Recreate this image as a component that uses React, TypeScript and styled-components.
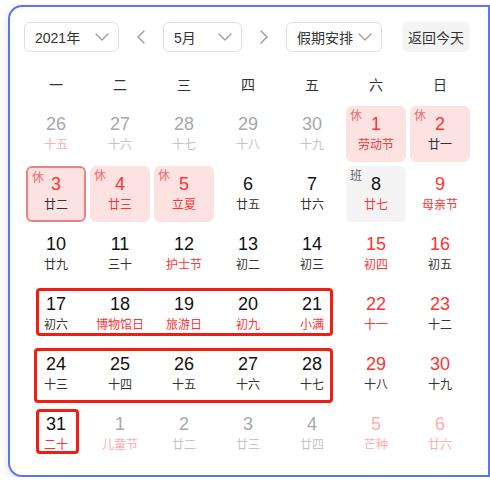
import React from "react";
import styled, { createGlobalStyle } from "styled-components";

const Global = createGlobalStyle`
  html, body { margin: 0; padding: 0; background: #fff; }
  body { font-family: "Liberation Sans", "Noto Sans CJK SC", sans-serif; }
`;

const Page = styled.div`
  padding: 5px 0 0 8px;
`;

const Card = styled.div`
  width: 482px;
  height: 472px;
  box-sizing: border-box;
  border: 2px solid #5b76f0;
  border-radius: 14px 0 0 14px;
  box-shadow: 0 3px 8px rgba(0, 0, 0, 0.12);
  padding: 15px 0 0 14px;
  background: #fff;
`;

const Header = styled.div`
  display: flex;
  align-items: center;
  height: 30px;
`;

const Select = styled.div<{ $w: number }>`
  width: ${(p) => p.$w}px;
  height: 30px;
  box-sizing: border-box;
  border: 1px solid #dcdfe6;
  border-radius: 6px;
  display: flex;
  align-items: center;
  justify-content: space-between;
  padding: 0 9px 0 10px;
  font-size: 14px;
  color: #333;
`;

const ArrowBtn = styled.div`
  width: 44px;
  height: 30px;
  display: flex;
  align-items: center;
  justify-content: center;
`;

const TodayBtn = styled.div`
  margin-left: 20px;
  width: 68px;
  height: 30px;
  border-radius: 6px;
  background: #f4f4f5;
  display: flex;
  align-items: center;
  justify-content: center;
  font-size: 14px;
  color: #333;
`;

const Weekdays = styled.div`
  margin-top: 22px;
  display: grid;
  grid-template-columns: repeat(7, 64px);
  height: 20px;
  align-items: center;
`;

const Weekday = styled.div`
  text-align: center;
  font-size: 14px;
  color: #333;
  font-family: "Noto Sans CJK SC", sans-serif;
`;

const GridWrap = styled.div`
  position: relative;
  margin: 12px 0 0 2px;
`;

const Grid = styled.div`
  display: grid;
  grid-template-columns: repeat(7, 60px);
  grid-auto-rows: 56px;
  column-gap: 4px;
  row-gap: 4px;
`;

const colors: Record<string, string> = {
  k: "#111",
  l: "#333",
  r: "#ff3333",
  g: "#a8a8a8",
  s: "#c4c4c4",
  p: "#ffadad",
};

const Cell = styled.div<{ $variant?: string; $selected?: boolean }>`
  position: relative;
  box-sizing: border-box;
  border-radius: 6px;
  display: flex;
  flex-direction: column;
  align-items: center;
  padding-top: 7px;
  background: ${(p) =>
    p.$variant === "rest" ? "#fde2e2" : p.$variant === "work" ? "#f4f4f5" : "transparent"};
  border: ${(p) => (p.$selected ? "2px solid #f08080" : "none")};
  ${(p) => (p.$selected ? "padding-top: 5px;" : "")}
`;

const Num = styled.div<{ $c: string }>`
  font-family: "Liberation Sans", sans-serif;
  font-size: 18px;
  line-height: 22px;
  color: ${(p) => p.$c};
`;

const Lunar = styled.div<{ $c: string }>`
  margin-top: 1px;
  font-family: "Noto Sans CJK SC", sans-serif;
  font-size: 12px;
  line-height: 16px;
  color: ${(p) => p.$c};
`;

const Tag = styled.span<{ $work?: boolean }>`
  position: absolute;
  left: 4px;
  top: 2px;
  font-family: "Noto Sans CJK SC", sans-serif;
  font-size: 12px;
  line-height: 14px;
  color: ${(p) => (p.$work ? "#666" : "#f56c6c")};
`;

const Mark = styled.div`
  position: absolute;
  box-sizing: border-box;
  border: 3px solid #f21d12;
  border-radius: 4px;
  pointer-events: none;
`;

type Day = {
  d: number;
  l: string;
  n: string;
  lc: string;
  v?: "rest" | "work";
  sel?: boolean;
};

const raw: [number, string, string, string, string?][] = [
  [26, "十五", "g", "p"], [27, "十六", "g", "s"], [28, "十七", "g", "s"], [29, "十八", "g", "s"], [30, "十九", "g", "s"], [1, "劳动节", "r", "r", "rest"], [2, "廿一", "r", "l", "rest"],
  [3, "廿二", "r", "l", "sel"], [4, "廿三", "r", "r", "rest"], [5, "立夏", "r", "r", "rest"], [6, "廿五", "k", "l"], [7, "廿六", "k", "l"], [8, "廿七", "k", "r", "work"], [9, "母亲节", "r", "r"],
  [10, "廿九", "k", "l"], [11, "三十", "k", "l"], [12, "护士节", "k", "r"], [13, "初二", "k", "l"], [14, "初三", "k", "l"], [15, "初四", "r", "r"], [16, "初五", "r", "l"],
  [17, "初六", "k", "l"], [18, "博物馆日", "k", "r"], [19, "旅游日", "k", "r"], [20, "初九", "k", "r"], [21, "小满", "k", "r"], [22, "十一", "r", "r"], [23, "十二", "r", "l"],
  [24, "十三", "k", "l"], [25, "十四", "k", "l"], [26, "十五", "k", "l"], [27, "十六", "k", "l"], [28, "十七", "k", "l"], [29, "十八", "r", "l"], [30, "十九", "r", "l"],
  [31, "二十", "k", "r"], [1, "儿童节", "g", "p"], [2, "廿二", "g", "s"], [3, "廿三", "g", "s"], [4, "廿四", "g", "s"], [5, "芒种", "p", "p"], [6, "廿六", "p", "p"],
];

const days: Day[] = raw.map(([d, l, n, lc, v]) => ({
  d,
  l,
  n: colors[n],
  lc: colors[lc],
  v: v === "sel" ? "rest" : (v as "rest" | "work" | undefined),
  sel: v === "sel",
}));

const Chevron = () => (
  <svg width="14" height="8" viewBox="0 0 14 8" fill="none">
    <polyline points="1,1 7,7 13,1" stroke="#999" strokeWidth="1.3" strokeLinejoin="round" strokeLinecap="round" />
  </svg>
);

const Side = ({ dir }: { dir: "l" | "r" }) => (
  <svg width="8" height="14" viewBox="0 0 8 14" fill="none">
    <polyline
      points={dir === "l" ? "7,1 1,7 7,13" : "1,1 7,7 1,13"}
      stroke="#999"
      strokeWidth="1.4"
      strokeLinejoin="round"
      strokeLinecap="round"
    />
  </svg>
);

export default function App() {
  return (
    <Page>
      <Global />
      <Card>
        <Header>
          <Select $w={95}>
            <span>2021年</span>
            <Chevron />
          </Select>
          <ArrowBtn>
            <Side dir="l" />
          </ArrowBtn>
          <Select $w={79}>
            <span>5月</span>
            <Chevron />
          </Select>
          <ArrowBtn>
            <Side dir="r" />
          </ArrowBtn>
          <Select $w={96}>
            <span>假期安排</span>
            <Chevron />
          </Select>
          <TodayBtn>返回今天</TodayBtn>
        </Header>
        <Weekdays>
          {["一", "二", "三", "四", "五", "六", "日"].map((w) => (
            <Weekday key={w}>{w}</Weekday>
          ))}
        </Weekdays>
        <GridWrap>
          <Grid>
            {days.map((c, i) => (
              <Cell key={i} $variant={c.v} $selected={c.sel}>
                {c.v && <Tag $work={c.v === "work"}>{c.v === "work" ? "班" : "休"}</Tag>}
                <Num $c={c.n}>{c.d}</Num>
                <Lunar $c={c.lc}>{c.l}</Lunar>
              </Cell>
            ))}
          </Grid>
          <Mark style={{ left: 10, top: 182, width: 297, height: 48 }} />
          <Mark style={{ left: 8, top: 242, width: 299, height: 55 }} />
          <Mark style={{ left: 10, top: 303, width: 43, height: 45 }} />
        </GridWrap>
      </Card>
    </Page>
  );
}
